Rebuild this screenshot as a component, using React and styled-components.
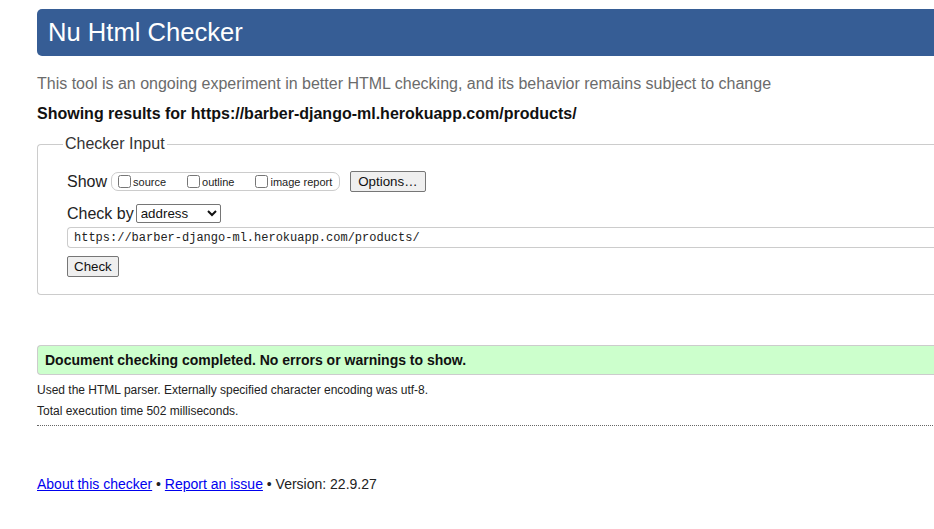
import React from 'react'
import styled, { createGlobalStyle } from 'styled-components'

const Global = createGlobalStyle`
  html, body {
    margin: 0;
    background: #fff;
    overflow: hidden;
  }
  body {
    font-family: "Liberation Sans", Arial, sans-serif;
    color: #222;
  }
`

const Page = styled.div`
  width: 1280px;
  padding: 9px 0 0 37px;
`

const Header = styled.h1`
  margin: 0;
  height: 47px;
  background: #365d95;
  border-radius: 5px 0 0 5px;
  color: #fff;
  font-weight: normal;
  font-size: 25.6px;
  line-height: 46px;
  padding-left: 11px;
`

const Intro = styled.p`
  margin: 19px 0 0;
  font-size: 16px;
  line-height: 18px;
  color: #6b6b6b;
`

const Results = styled.p`
  margin: 12px 0 0;
  font-size: 16px;
  line-height: 18px;
  font-weight: bold;
  color: #111;
`

const Fieldset = styled.fieldset`
  margin: 12px 0 0;
  padding: 8px 29px 17px;
  border: 1px solid #ccc;
  border-right: none;
  border-radius: 4px 0 0 4px;
`

const Legend = styled.legend`
  margin-left: -4px;
  padding: 0 2px;
  font-size: 16px;
  line-height: 18px;
  color: #333;
`

const Row = styled.div`
  display: flex;
  align-items: center;
  margin-top: ${p => p.$top || 0}px;
  font-size: 16px;
  color: #222;
`

const Label = styled.span`
  margin-right: 4px;
`

const Pill = styled.div`
  display: flex;
  align-items: center;
  height: 17px;
  padding: 0 7px 0 6px;
  border: 1px solid #ccc;
  border-radius: 7px;
  margin-right: 10px;
`

const Opt = styled.label`
  display: flex;
  align-items: center;
  font-size: 11px;
  color: #222;
  margin-right: ${p => p.$gap || 0}px;
`

const Box = styled.input.attrs({ type: 'checkbox' })`
  width: 13px;
  height: 13px;
  margin: 0 2px 0 0;
`

const Button = styled.button`
  font-family: "Liberation Sans", Arial, sans-serif;
  font-size: 13.33px;
  height: 21px;
  padding: 0 ${p => p.$pad || 6}px;
  background: #efefef;
  border: 1px solid #767676;
  border-radius: 2px;
  color: #111;
`

const Select = styled.select`
  font-family: "Liberation Sans", Arial, sans-serif;
  font-size: 13.33px;
  width: 85px;
  height: 19px;
  margin-left: 2px;
  border: 1px solid #767676;
  border-radius: 2px;
  background: #fff;
  color: #111;
`

const UrlInput = styled.input`
  box-sizing: border-box;
  width: 100%;
  height: 21px;
  margin-top: 4px;
  padding: 0 6px;
  border: 1px solid #ccc;
  border-right: none;
  border-radius: 4px 0 0 4px;
  font-family: "Liberation Mono", Consolas, monospace;
  font-size: 12px;
  color: #222;
  display: block;
`

const Success = styled.div`
  margin-top: 50px;
  height: 28px;
  padding-left: 7px;
  background: #ccffcc;
  border: 1px solid #ccc;
  border-right: none;
  border-radius: 4px 0 0 4px;
  font-size: 14px;
  font-weight: bold;
  line-height: 28px;
  color: #111;
`

const Note = styled.p`
  margin: ${p => p.$top}px 0 0;
  font-size: 12px;
  line-height: 14px;
  color: #222;
`

const Rule = styled.hr`
  margin: 7px 0 0;
  border: none;
  border-top: 1px dotted #666;
`

const Footer = styled.p`
  margin: 50px 0 0;
  font-size: 14px;
  line-height: 16px;
  color: #222;

  a {
    color: #0000ee;
  }
`

export default function App() {
  return (
    <Page>
      <Global />
      <Header>Nu Html Checker</Header>
      <Intro>This tool is an ongoing experiment in better HTML checking, and its behavior remains subject to change</Intro>
      <Results>Showing results for https://barber-django-ml.herokuapp.com/products/</Results>
      <Fieldset>
        <Legend>Checker Input</Legend>
        <Row $top={10}>
          <Label>Show</Label>
          <Pill>
            <Opt $gap={21}><Box />source</Opt>
            <Opt $gap={21}><Box />outline</Opt>
            <Opt><Box />image report</Opt>
          </Pill>
          <Button $pad={7}>Options…</Button>
        </Row>
        <Row $top={12}>
          Check by
          <Select defaultValue="address">
            <option value="address">address</option>
            <option value="file">file upload</option>
            <option value="text">text input</option>
          </Select>
        </Row>
        <UrlInput defaultValue="https://barber-django-ml.herokuapp.com/products/" />
        <Row $top={8}>
          <Button>Check</Button>
        </Row>
      </Fieldset>
      <Success>Document checking completed. No errors or warnings to show.</Success>
      <Note $top={8}>Used the HTML parser. Externally specified character encoding was utf-8.</Note>
      <Note $top={7}>Total execution time 502 milliseconds.</Note>
      <Rule />
      <Footer>
        <a href="#about">About this checker</a> • <a href="#report">Report an issue</a> • Version: 22.9.27
      </Footer>
    </Page>
  )
}
